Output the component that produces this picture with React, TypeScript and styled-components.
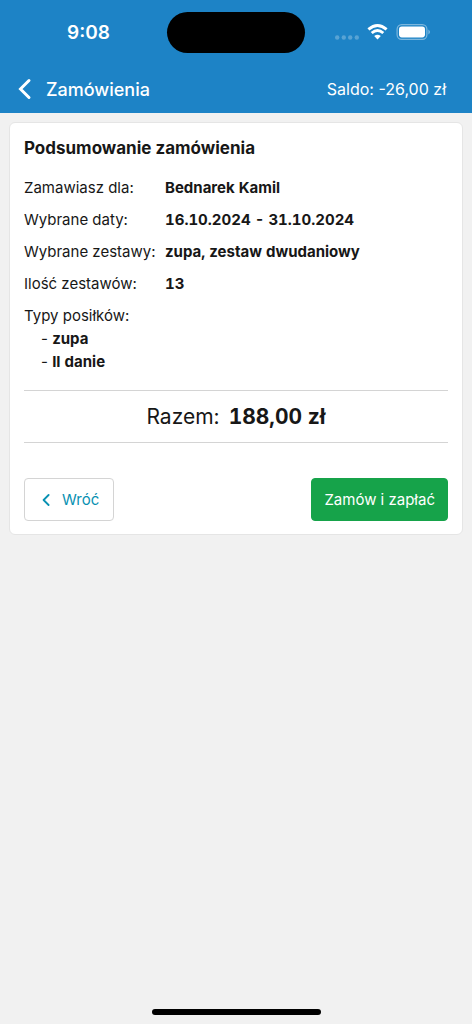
import React from "react";
import styled, { createGlobalStyle } from "styled-components";

const GlobalStyle = createGlobalStyle`
  *, *::before, *::after { box-sizing: border-box; }
  body {
    margin: 0;
    background: #f1f1f1;
    color: #171717;
    font-family: Inter, "Liberation Sans", sans-serif;
    font-size: 15px;
  }
  button { font: inherit; cursor: pointer; }
`;

const Screen = styled.div`
  display: flex;
  flex-direction: column;
  min-height: 100vh;
`;

const Header = styled.header`
  background: #1d83c6;
  color: #fff;
`;

const StatusBar = styled.div`
  display: grid;
  grid-template-columns: 1fr 138px 1fr;
  align-items: center;
  padding: 12px 0;
`;

const Clock = styled.time`
  padding-right: 57px;
  text-align: right;
  font-size: 19px;
  font-weight: 600;
`;

const Island = styled.div`
  height: 41px;
  border-radius: 21px;
  background: #000;
`;

const StatusIcons = styled.div`
  display: flex;
  align-items: center;
  padding-left: 30px;
`;

const NavBar = styled.nav`
  display: flex;
  align-items: center;
  justify-content: space-between;
  height: 48px;
  padding: 0 26px 0 18px;
`;

const BackLink = styled.a`
  display: flex;
  align-items: center;
  gap: 14px;
  color: inherit;
  font-size: 18px;
  font-weight: 500;
  text-decoration: none;
`;

const Balance = styled.span`
  font-size: 16px;
`;

const Main = styled.main`
  padding: 9px;
`;

const Card = styled.section`
  padding: 14px 14px 13px;
  border: 1px solid #e5e5e5;
  border-radius: 6px;
  background: #fff;
`;

const Title = styled.h1`
  margin: 0 0 17px;
  font-size: 17px;
  font-weight: 700;
  line-height: 22px;
`;

const Details = styled.dl`
  display: grid;
  grid-template-columns: 141px 1fr;
  row-gap: 8px;
  margin: 0;
  line-height: 24px;
`;

const Label = styled.dt``;

const Value = styled.dd`
  margin: 0;
  font-weight: 700;
  font-variant-numeric: tabular-nums;
`;

const MealTypes = styled.dd`
  grid-column: 1 / -1;
  margin: -9px 0 0 17px;
  line-height: 23px;
`;

const MealList = styled.ul`
  margin: 0;
  padding: 0;
  list-style: none;
`;

const Strong = styled.strong`
  font-weight: 700;
  font-variant-numeric: tabular-nums;
`;

const Total = styled.p`
  display: flex;
  justify-content: center;
  gap: 9px;
  margin: 17px 0 35px;
  border: solid #d4d4d4;
  border-width: 1px 0;
  font-size: 21px;
  line-height: 51px;
`;

const Actions = styled.div`
  display: flex;
  justify-content: space-between;
`;

const Button = styled.button<{ $primary?: boolean }>`
  display: flex;
  align-items: center;
  gap: 12px;
  height: 43px;
  padding: ${({ $primary }) => ($primary ? "0 12px" : "0 14px 0 17px")};
  border: 1px solid ${({ $primary }) => ($primary ? "#16a34a" : "#d4d4d4")};
  border-radius: 4px;
  background: ${({ $primary }) => ($primary ? "#16a34a" : "#fff")};
  color: ${({ $primary }) => ($primary ? "#fff" : "#0891b2")};
`;

const HomeIndicator = styled.div`
  width: 169px;
  height: 6px;
  margin: auto auto 9px;
  border-radius: 3px;
  background: #000;
`;

const details = [
  ["Zamawiasz dla:", "Bednarek Kamil"],
  ["Wybrane daty:", "16.10.2024 - 31.10.2024"],
  ["Wybrane zestawy:", "zupa, zestaw dwudaniowy"],
  ["Ilość zestawów:", "13"],
];

const mealTypes = ["zupa", "II danie"];

const StatusGlyphs = () => (
  <svg width="98" height="20" viewBox="0 0 98 20" fill="none" aria-hidden="true">
    <g fill="#fff" opacity="0.26">
      <circle cx="2.2" cy="14.5" r="2.2" />
      <circle cx="8.8" cy="14.5" r="2.2" />
      <circle cx="15.2" cy="14.5" r="2.2" />
      <circle cx="21.8" cy="14.5" r="2.2" />
    </g>
    <g stroke="#fff" strokeWidth="2.9">
      <path d="M33.4 6.4Q42.5-1.6 51.6 6.4" />
      <path d="M36.7 10Q42.5 4.9 48.3 10" />
    </g>
    <path d="M39.2 13.1Q42.5 10.3 45.8 13.1L42.5 16.4Z" fill="#fff" />
    <g opacity="0.42">
      <rect x="62.1" y="1.6" width="29.8" height="14.8" rx="4.6" stroke="#fff" strokeWidth="1.2" />
      <path d="M93.4 6.6Q96.6 9 93.4 11.4Z" fill="#fff" />
    </g>
    <rect x="64" y="3.6" width="26" height="10.8" rx="2.8" fill="#fff" />
  </svg>
);

export default function App() {
  return (
    <>
      <GlobalStyle />
      <Screen>
        <Header>
          <StatusBar>
            <Clock>9:08</Clock>
            <Island />
            <StatusIcons>
              <StatusGlyphs />
            </StatusIcons>
          </StatusBar>
          <NavBar>
            <BackLink href="#orders">
              <svg width="14" height="22" viewBox="0 0 14 22" fill="none" aria-hidden="true">
                <path d="M11 2.5L2.5 11L11 19.5" stroke="#fff" strokeWidth="3" strokeLinecap="round" strokeLinejoin="miter" />
              </svg>
              Zamówienia
            </BackLink>
            <Balance>Saldo: -26,00 zł</Balance>
          </NavBar>
        </Header>
        <Main>
          <Card>
            <Title>Podsumowanie zamówienia</Title>
            <Details>
              {details.map(([label, value]) => (
                <React.Fragment key={label}>
                  <Label>{label}</Label>
                  <Value>{value}</Value>
                </React.Fragment>
              ))}
              <Label>Typy posiłków:</Label>
              <MealTypes>
                <MealList>
                  {mealTypes.map((meal) => (
                    <li key={meal}>
                      - <Strong>{meal}</Strong>
                    </li>
                  ))}
                </MealList>
              </MealTypes>
            </Details>
            <Total>
              <span>Razem:</span>
              <Strong>188,00 zł</Strong>
            </Total>
            <Actions>
              <Button type="button">
                <svg width="8" height="12" viewBox="0 0 8 12" fill="none" aria-hidden="true">
                  <path d="M6.6 1L1.6 6L6.6 11" stroke="currentColor" strokeWidth="1.8" strokeLinecap="round" strokeLinejoin="round" />
                </svg>
                Wróć
              </Button>
              <Button type="button" $primary>
                Zamów i zapłać
              </Button>
            </Actions>
          </Card>
        </Main>
        <HomeIndicator />
      </Screen>
    </>
  );
}
